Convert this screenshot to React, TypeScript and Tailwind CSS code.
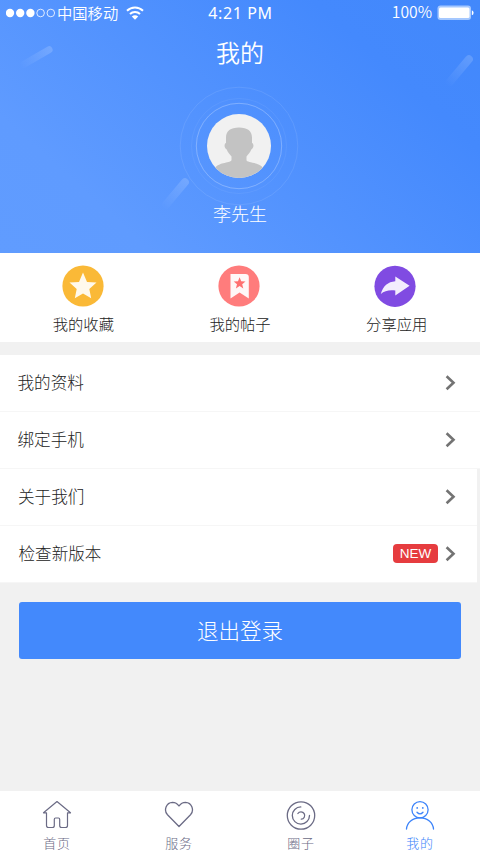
import React from 'react';

const StatusBar: React.FC = () => (
  <div className="flex h-[26px] items-center text-white">
    <div className="flex w-[160px] items-center pl-[6px]">
      <svg width="50" height="10" viewBox="0 0 50 10">
        <circle cx="4" cy="5" r="4.2" fill="white" />
        <circle cx="14.2" cy="5" r="4.2" fill="white" />
        <circle cx="24.4" cy="5" r="4.2" fill="white" />
        <circle cx="34.6" cy="5" r="3.8" fill="none" stroke="white" strokeWidth="0.8" />
        <circle cx="44.8" cy="5" r="3.8" fill="none" stroke="white" strokeWidth="0.8" />
      </svg>
      <span className="ml-[1px] pb-[2px] text-[15.3px] leading-[24px] font-[350] whitespace-nowrap">中国移动</span>
      <svg className="ml-[8px]" width="18" height="14" viewBox="0 0 18 14" fill="none" stroke="white">
        <path d="M1 4.8C5.5 .3 12.5 .3 17 4.8" strokeWidth="2" />
        <path d="M4 8C6.8 5.2 11.2 5.2 14 8" strokeWidth="2" />
        <path d="M9 13.7L5.8 10.5C7.6 8.8 10.4 8.8 12.2 10.5Z" fill="white" stroke="none" />
      </svg>
    </div>
    <div className="w-[161px] text-center font-['Noto_Sans'] text-[16px] leading-[26px] font-normal tracking-[0.6px]">4:21 PM</div>
    <div className="flex w-[159px] items-center justify-end pr-[6px]">
      <span className="pb-[2px] text-[15.7px] leading-[22px] font-[350]">100%</span>
      <svg className="ml-[5px]" width="37" height="16" viewBox="0 0 37 16">
        <rect x="0.5" y="0.5" width="33.5" height="14.6" rx="3" fill="#a5c8ff" />
        <rect x="2" y="2.5" width="30.5" height="10.6" rx="1.5" fill="white" />
        <path d="M34.8 5.2Q36.6 5.7 36.6 7.7T34.8 10.2Z" fill="white" />
      </svg>
    </div>
  </div>
);

const Streaks: React.FC = () => (
  <svg className="pointer-events-none absolute inset-0" width="480" height="253" viewBox="0 0 480 253">
    <defs>
      <linearGradient id="streak" x1="0" y1="0" x2="1" y2="0">
        <stop offset="0" stopColor="white" stopOpacity="0" />
        <stop offset="1" stopColor="white" stopOpacity="0.17" />
      </linearGradient>
    </defs>
    <rect x="-34" y="-3.5" width="37" height="7" rx="3.5" fill="url(#streak)" transform="translate(49.5 49.5) rotate(-30)" />
    <rect x="-35" y="-4" width="38" height="8" rx="4" fill="url(#streak)" transform="translate(469.5 58.5) rotate(-50)" />
    <rect x="-35" y="-4" width="38" height="8" rx="4" fill="url(#streak)" transform="translate(185.5 181.5) rotate(-50)" />
  </svg>
);

const Avatar: React.FC = () => (
  <svg width="120" height="120" viewBox="0 0 120 120">
    <defs>
      <clipPath id="face">
        <circle cx="60" cy="60" r="32" />
      </clipPath>
    </defs>
    <circle cx="60" cy="60" r="58.8" fill="none" stroke="white" strokeOpacity="0.12" strokeWidth="0.8" />
    <circle cx="60" cy="60" r="47.5" fill="none" stroke="white" strokeOpacity="0.08" strokeWidth="0.8" />
    <circle cx="60" cy="60" r="42.7" fill="none" stroke="white" strokeOpacity="0.3" strokeWidth="0.9" />
    <circle cx="60" cy="60" r="32" fill="#f1f1f1" />
    <path
      clipPath="url(#face)"
      fill="#c3c3c3"
      d="M60 41.5C68.5 41.500 73 45 73 51.500V57C75.200 57.500 74.800 62.500 72.300 63.500C71 67 69 68.500 67.500 70.500V74C67.500 77 80 76 84 82V94H36V82C40 76 52.500 77 52.500 74V70.500C51 68.500 49 67 47.700 63.500C45.200 62.500 44.800 57.500 47 57V51.500C47 45 51.500 41.500 60 41.500Z"
    />
  </svg>
);

const CollectIcon = () => (
  <svg width="42" height="42" viewBox="0 0 42 42">
    <circle cx="21" cy="21" r="20.600" fill="#fab937" />
    <path d="M21 7.500L25 16.900L34.500 17.400L27.300 23.900L29.200 33.300L21 28.500L12.800 33.300L14.700 23.900L7.500 17.400L17 16.900Z" fill="#fff9ec" />
  </svg>
);

const PostIcon = () => (
  <svg width="42" height="42" viewBox="0 0 42 42">
    <circle cx="21" cy="21" r="20.600" fill="#ff7c7c" />
    <path d="M12.500 9H27.500Q30.800 9 30.800 12V33.500L21.600 27.500L12.500 33.500Z" fill="#fff7f7" />
    <path d="M21.600 12.200L23.200 16.200L27.500 16.400L24.200 19.200L25.300 23.400L21.600 21.100L17.900 23.400L19 19.200L15.700 16.400L20 16.200Z" fill="#ff7070" />
  </svg>
);

const ShareIcon = () => (
  <svg width="42" height="42" viewBox="0 0 42 42">
    <circle cx="21" cy="21.300" r="20.600" fill="#804be2" />
    <path d="M21.300 11.500L35.600 20.800L21.300 30.500V25.600C15 24.800 10.500 26 6.800 29C9 20.800 14 16.800 21.300 16.200Z" fill="#f3edfd" />
  </svg>
);

const Chevron = () => (
  <svg width="11" height="16" viewBox="0 0 11 16" fill="none" stroke="#737373" strokeWidth="2.600">
    <path d="M1.600 1.300L8.500 7.800L1.600 14.300" />
  </svg>
);

const HomeIcon = () => (
  <svg width="30" height="30" viewBox="0 0 30 30" fill="none" stroke="currentColor" strokeWidth="1.200" strokeLinejoin="round">
    <path d="M15 1.500L28.500 12.800H25.500V25.500Q25.500 27.500 23.500 27.500H19.500Q17.700 27.500 17.700 25.500V19.500Q17.700 18 16.500 18H13.500Q12.300 18 12.300 19.500V25.500Q12.300 27.500 10.500 27.500H6.500Q4.500 27.500 4.500 25.500V12.800H1.500Z" />
  </svg>
);

const HeartIcon = () => (
  <svg width="30" height="30" viewBox="0 0 30 30" fill="none" stroke="currentColor" strokeWidth="1.300" strokeLinejoin="round">
    <path d="M15 26.500L3.500 14.800C-.5 10.500 2 2.500 8.500 2.300C11.500 2.300 13.500 3.800 15 6C16.500 3.800 18.500 2.300 21.500 2.300C28 2.500 30.500 10.500 26.500 14.800Z" />
  </svg>
);

const CircleIcon = () => (
  <svg width="30" height="30" viewBox="0 0 30 30" fill="none" stroke="currentColor" strokeWidth="1.300" strokeLinecap="round">
    <circle cx="15" cy="15.500" r="13.700" />
    <path d="M14.800 6.900A8.600 8.600 0 1 0 23.500 15.500" />
    <path d="M11.900 13.500A3.700 3.700 0 1 1 15.300 19.200" />
  </svg>
);

const MineIcon = () => (
  <svg width="30" height="30" viewBox="0 0 30 30" fill="none" stroke="currentColor" strokeWidth="1.300" strokeLinecap="round">
    <circle cx="15" cy="9.700" r="8.100" />
    <path d="M1.500 29C2 22.500 7.500 17.800 15 17.800S28 22.500 28.500 29" />
    <path d="M12 12.300Q15 15.600 18 12.300" />
    <circle cx="12.200" cy="7.900" r="0.900" fill="currentColor" stroke="none" />
    <circle cx="17.800" cy="7.900" r="0.900" fill="currentColor" stroke="none" />
  </svg>
);

const actions = [
  { label: '我的收藏', icon: <CollectIcon />, pad: 'pr-0' },
  { label: '我的帖子', icon: <PostIcon />, pad: 'pr-[2px]' },
  { label: '分享应用', icon: <ShareIcon />, pad: 'pr-[4px]' },
];

const rows = [
  { label: '我的资料', row: 'pl-[17.5px]', end: 'mr-[24px]' },
  { label: '绑定手机', row: 'pl-[17.5px]', end: 'mr-[24px]' },
  { label: '关于我们', row: 'mr-[3px] pl-[18px]', end: 'mr-[21px]' },
  { label: '检查新版本', row: 'mr-[3px] pl-[18.5px]', end: 'mr-[21px]', isNew: true },
];

const tabs = [
  { label: '首页', icon: <HomeIcon />, style: 'text-[#6b6b85]' },
  { label: '服务', icon: <HeartIcon />, style: 'ml-[92px] text-[#6b6b85]' },
  { label: '圈子', icon: <CircleIcon />, style: 'ml-[92px] text-[#6b6b85]' },
  { label: '我的', icon: <MineIcon />, style: 'ml-[89px] text-[#3d84fa]' },
];

const App: React.FC = () => {
  return (
    <div className="flex h-[854px] w-[480px] flex-col overflow-hidden bg-[#f1f1f1] font-['Noto_Sans_CJK_SC',sans-serif] font-light">
      <header className="relative h-[253px] shrink-0 bg-[linear-gradient(42deg,#609cff_0%,#5f9bff_20%,#4489fd_78%,#4288fb_100%)] text-white">
        <Streaks />
        <StatusBar />
        <h1 className="mt-[8px] h-[36px] text-center text-[24px] leading-[36px] font-[350]">我的</h1>
        <div className="mt-[16px] flex justify-center pr-[2px]">
          <Avatar />
        </div>
        <p className="-mt-[6px] text-center text-[18px] leading-[26px]">李先生</p>
      </header>

      <section className="flex h-[89px] shrink-0 bg-white px-[5px]">
        {actions.map((item) => (
          <div key={item.label} className="flex flex-1 flex-col items-center pt-[12px]">
            <div className={item.pad}>{item.icon}</div>
            <span className="mt-[4px] text-[15.300px] leading-[24px] text-[#222]">{item.label}</span>
          </div>
        ))}
      </section>

      <ul className="mt-[13px] shrink-0">
        {rows.map((item) => (
          <li key={item.label} className={`flex h-[57px] items-center border-b border-[#f6f6f6] bg-white ${item.row}`}>
            <span className="flex-1 pb-[2px] text-[16.600px] text-[#222]">{item.label}</span>
            {item.isNew && (
              <span className="mr-[7px] mb-[1px] h-[19px] w-[45px] rounded-[4px] bg-[#e63c3f] text-center font-['Liberation_Sans'] text-[13.500px] leading-[19px] font-normal text-white">
                NEW
              </span>
            )}
            <span className={item.end}>
              <Chevron />
            </span>
          </li>
        ))}
      </ul>

      <button className="mx-[19px] mt-[19px] h-[57px] shrink-0 rounded-[3px] bg-[#4389fc] text-[21.500px] text-white">退出登录</button>

      <nav className="mt-auto flex h-[63px] shrink-0 bg-white pl-[42px]">
        {tabs.map((tab) => (
          <div key={tab.label} className={`flex w-[30px] flex-col items-center pt-[9px] ${tab.style}`}>
            {tab.icon}
            <span className="mt-[3px] text-[13px] leading-[20px] tracking-[0.800px] whitespace-nowrap">{tab.label}</span>
          </div>
        ))}
      </nav>
    </div>
  );
};

export default App;
